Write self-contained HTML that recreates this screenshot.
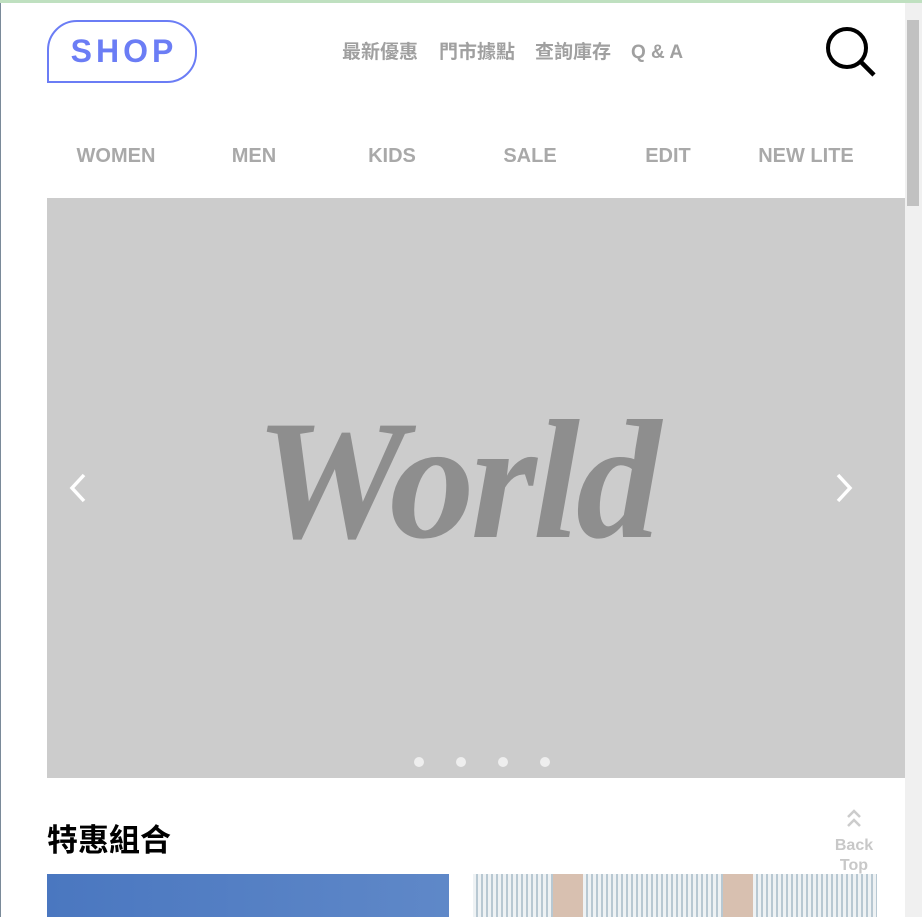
<!DOCTYPE html>
<html><head><meta charset="utf-8"><style>
*{margin:0;padding:0;box-sizing:border-box}
html,body{width:922px;height:917px;overflow:hidden;background:#fff;font-family:"Liberation Sans","Noto Sans CJK TC",sans-serif}
.top{position:absolute;left:0;top:0;width:922px;height:3px;background:#bfe0c0}
.lb{position:absolute;left:0;top:3px;width:1px;height:914px;background:#7a8a99}
.sb{position:absolute;left:905px;top:3px;width:17px;height:914px;background:#f0f0f0}
.thumb{position:absolute;left:907px;top:20px;width:12px;height:186px;background:#c1c1c1}
.logo{position:absolute;left:47px;top:20px;width:150px;height:63px;border:2.5px solid #6b7df5;border-radius:30px 30px 30px 0;color:#6b7df5;font-weight:bold;font-size:32px;letter-spacing:4px;text-align:center;line-height:58px;padding-left:4px}
.tn{position:absolute;top:40px;left:342px;font-size:19px;color:#a0a0a0;font-weight:bold}
.tn span{position:absolute;white-space:nowrap;top:0;line-height:26px;height:26px}
.nav{position:absolute;top:145px;left:47px;width:828px;display:flex;font-size:20px;color:#a9a9a9;font-family:"Liberation Sans Narrow","Liberation Sans",sans-serif;font-weight:bold}
.nav div{flex:1;text-align:center}
.hero{position:absolute;left:47px;top:198px;width:858px;height:580px;background:#cccccc}
.world{position:absolute;left:-40px;right:0;top:192px;text-align:center;font-family:"Liberation Serif",serif;font-style:italic;font-weight:bold;font-size:170px;line-height:180px;color:#8e8e8e;letter-spacing:-4px}
.dot{position:absolute;top:559px;width:10px;height:10px;border-radius:50%;background:#eee}
h2{position:absolute;left:47px;top:815px;font-size:31px;font-weight:bold;color:#000}
.bt{position:absolute;left:830px;top:808px;width:48px;text-align:center;color:#c8c8c8;font-size:16px;font-weight:bold;line-height:20px}
.c1{position:absolute;left:47px;top:874px;width:402px;height:43px;background:linear-gradient(90deg,#4a77c0,#5f88c8)}
.c2{position:absolute;left:473px;top:874px;width:404px;height:43px;background:repeating-linear-gradient(90deg,#eef2f4 0 3px,#b8c8d2 3px 5px)}
.c2 i{position:absolute;top:0;width:30px;height:43px;background:#d8c0b0}
</style></head><body>
<div class="top"></div><div class="lb"></div>
<div class="logo">SHOP</div>
<div class="tn"><span style="left:0">最新優惠</span><span style="left:97px">門市據點</span><span style="left:193px">查詢庫存</span><span style="left:289px;font-family:'Liberation Sans',sans-serif">Q &amp; A</span></div>
<svg style="position:absolute;left:824px;top:25px" width="54" height="54" viewBox="0 0 54 54"><circle cx="23" cy="23" r="19" fill="none" stroke="#000" stroke-width="4"/><line x1="37" y1="37" x2="50" y2="50" stroke="#000" stroke-width="4.5"/></svg>
<div class="nav"><div>WOMEN</div><div>MEN</div><div>KIDS</div><div>SALE</div><div>EDIT</div><div>NEW LITE</div></div>
<div class="hero">
<div class="world">World</div>
<svg style="position:absolute;left:20px;top:274px" width="22" height="32"><path d="M17 3 L5 16 L17 29" fill="none" stroke="#fff" stroke-width="3.5"/></svg>
<svg style="position:absolute;left:786px;top:274px" width="22" height="32"><path d="M5 3 L17 16 L5 29" fill="none" stroke="#fff" stroke-width="3.5"/></svg>
<div class="dot" style="left:367px"></div><div class="dot" style="left:409px"></div><div class="dot" style="left:451px"></div><div class="dot" style="left:493px"></div>
</div>
<h2>特惠組合</h2>
<div class="bt"><svg width="20" height="22" viewBox="0 0 20 22"><path d="M4 9 L10 3 L16 9 M4 18 L10 12 L16 18" fill="none" stroke="#ccc" stroke-width="2.5"/></svg><br>Back<br>Top</div>
<div class="c1"></div>
<div class="c2"><i style="left:80px"></i><i style="left:250px"></i></div>
<div class="sb"></div><div class="thumb"></div>
</body></html>
